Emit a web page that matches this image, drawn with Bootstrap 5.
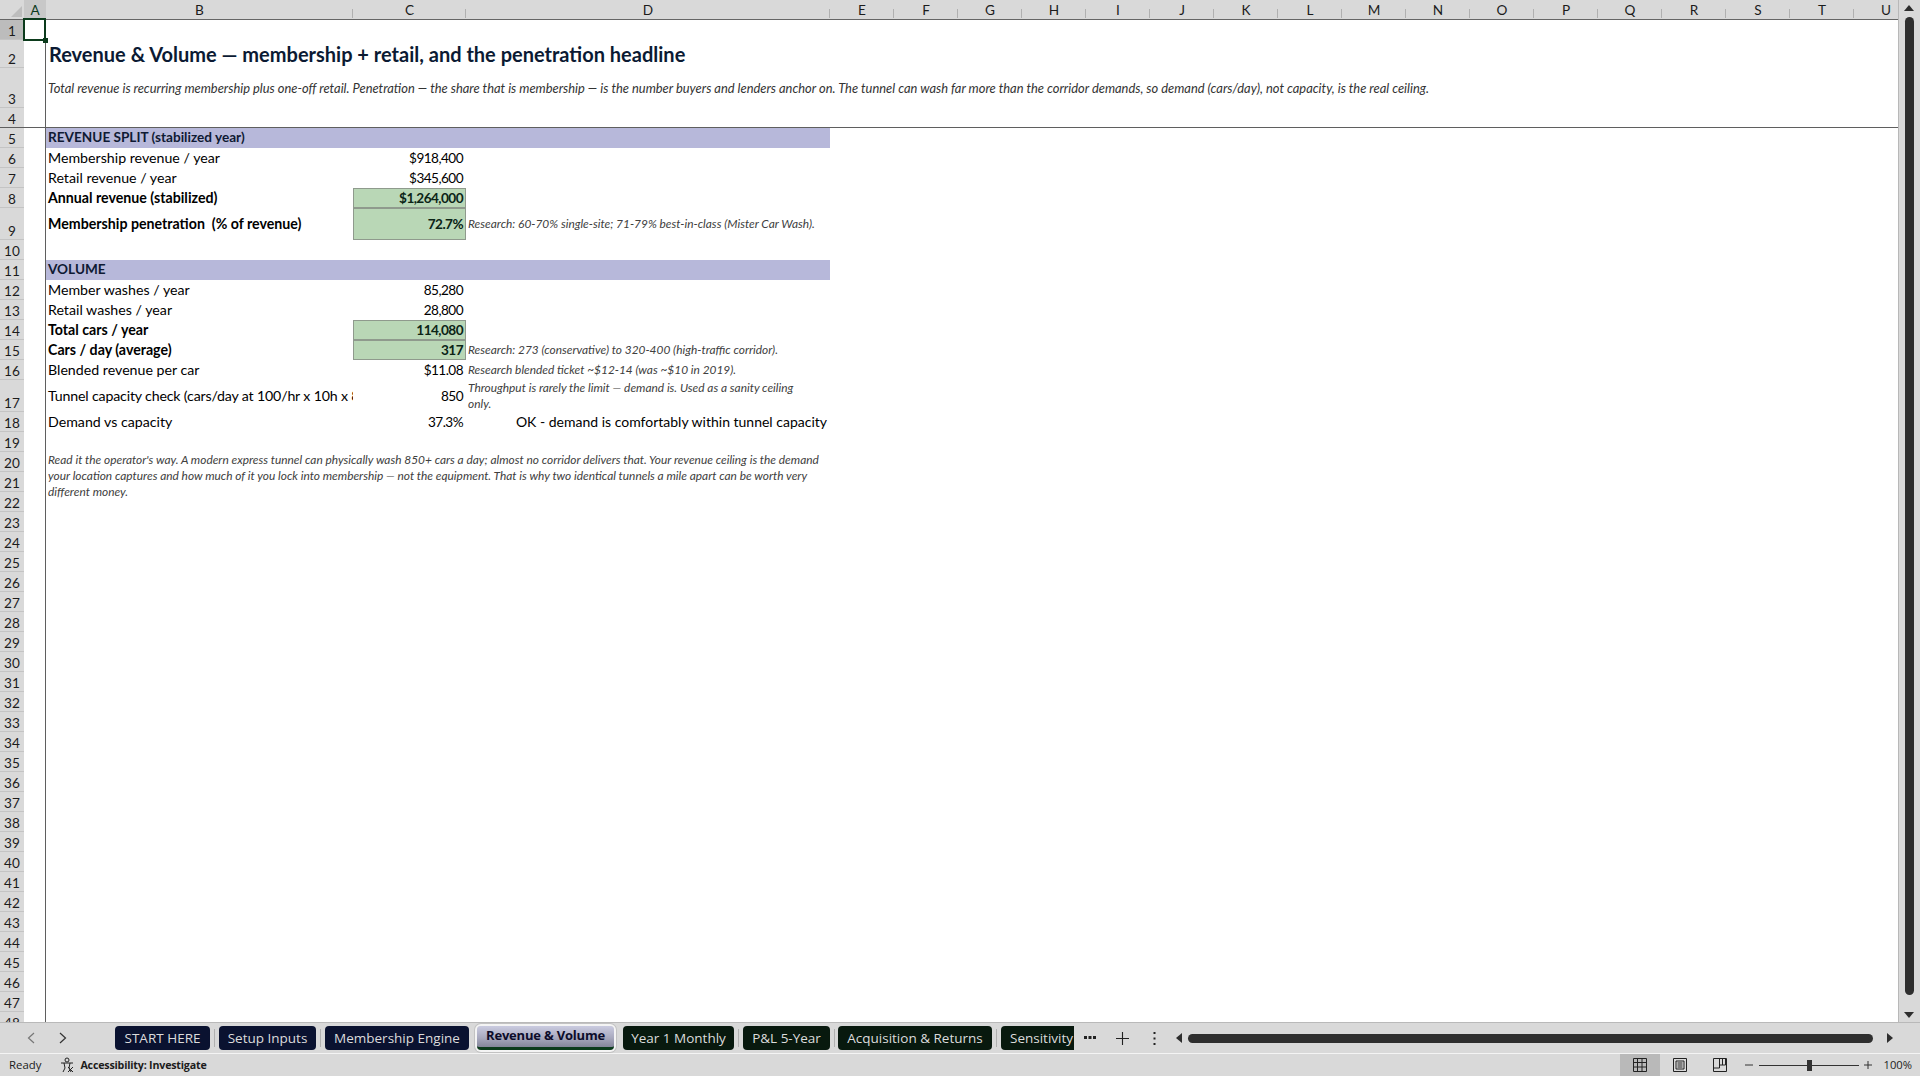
<!DOCTYPE html>
<html lang="en"><head><meta charset="utf-8"><title>Revenue &amp; Volume</title>
<link href="https://cdn.jsdelivr.net/npm/bootstrap@5.3.0/dist/css/bootstrap.min.css" rel="stylesheet">
<style>
html,body{height:100%;overflow:hidden}
body{font-family:Lato,"Liberation Sans",sans-serif;background:#d9d9d9;color:#000}
.xl-app{height:1076px;width:1920px}
.xl-main{height:1023px;overflow:hidden;border-bottom:1px solid #b9b9b9}
.xl-gridwrap{width:1899px;overflow:hidden;position:relative;background:#fff;border-right:1px solid #b8b8b8}
.xl-sheet{border-collapse:separate;border-spacing:0;table-layout:fixed;width:1898px;font-size:14.2px}
.xl-sheet col.w-rh{width:24px}.xl-sheet col.w-a{width:22px}.xl-sheet col.w-b{width:307px}.xl-sheet col.w-c{width:113px}.xl-sheet col.w-d{width:364px}.xl-sheet col.w-n{width:64px}.xl-sheet col.w-u{width:44px}
.xl-sheet th,.xl-sheet td{padding:0;overflow:hidden;white-space:nowrap;line-height:1}
.xl-sheet thead th{height:20px;background:#d9d9d9;border-bottom:1px solid #666;font-weight:400;text-align:center;color:#1c1c1c;font-size:13.6px;position:relative;padding-top:2px}
.xl-sheet thead th.hc::after{content:"";position:absolute;right:0;bottom:1px;height:9px;width:1px;background:#b0b0b0}
.xl-sheet thead th.hsel{background:#c8c8c8;color:#0c3b1c}
.xl-sheet thead th.hu{padding-left:20px}
.xl-sheet tbody th{background:#d9d9d9;text-align:center;font-weight:400;font-size:13.6px;color:#1c1c1c;vertical-align:bottom;border-bottom:1px solid #c4c4c4}
.xl-sheet tbody th.hsel{background:#bcbcbc}
.xl-sheet td{vertical-align:middle}
.xl-sheet td.xa{border-right:1px solid #5f5f5f}
.rh20{height:20px}.rh28{height:28px}.rh40{height:40px}.rh32{height:32px}
.xl-freeze>th,.xl-freeze>td{border-bottom:1px solid #5f5f5f !important}
.xl-title{font-size:20px;font-weight:700;color:#0b1a33;padding-left:3px !important}
.xl-sub{font-size:12.9px;font-style:italic;color:#333;padding-left:2px !important}
.xl-sec{background:#b7b8da;font-weight:700;color:#0f1a33;padding-left:2px !important;font-size:13.6px}
.xl-lab{padding:1px 0 0 2px !important}
.xl-tight{letter-spacing:-.17px}
.xl-b{font-weight:700}
.xl-val{text-align:right;padding:1px 3px 0 0 !important;font-size:13.6px;letter-spacing:-.55px}
.xl-kpi{background:#b9d7b6;font-weight:700;color:#0b2416;box-shadow:inset 0 0 0 1px #8f9a8d}
.xl-note{font-size:11.9px;font-style:italic;color:#404040;padding-left:2px !important}
.xl-wrap{white-space:normal !important;line-height:16px !important}
.xl-ok{text-align:right;padding-right:3px !important;font-size:14px}
.xl-para{font-size:11.9px;font-style:italic;color:#404040;white-space:normal !important;line-height:16px !important;vertical-align:top !important;padding:0 0 0 2px !important}
.xl-cursor{position:absolute;left:23px;top:18px;width:23px;height:23px;border:2px solid #0c3b1c}
.xl-cursor::after{content:"";position:absolute;right:-4px;bottom:-4px;width:5px;height:5px;background:#0c3b1c}
.xl-vbar{width:21px;position:relative}
.xl-vthumb{position:absolute;left:6px;top:17px;width:9px;height:978px;background:#2e2e2e;border-radius:5px}
.xl-vup,.xl-vdn{position:absolute;left:5px;width:0;height:0;border-left:5px solid transparent;border-right:5px solid transparent}
.xl-vup{top:5px;border-bottom:6px solid #2e2e2e}
.xl-vdn{top:1012px;border-top:6px solid #2e2e2e}
.xl-tabs{height:30px;font-family:"Open Sans","Liberation Sans",sans-serif}
.xl-navs{width:115px;padding-left:27px;gap:24px;color:#555;flex:none}
.xl-tabrow{width:959px;overflow:hidden;height:30px;padding-top:3px;flex:none}
.xl-tab{height:24px;border-radius:4px;font-size:13.5px;color:#dcdcdc;line-height:24px;white-space:nowrap;flex:none;text-align:center}
.xl-navy{background:#0a1230}
.xl-dk{background:#08190e}
.t95{width:95px}.t97{width:97px}.t144{width:144px}.t137{width:137px}.t111{width:111px}.t87{width:87px}.t154{width:154px}.t80{width:80px;text-align:left;padding-left:9px}
.xl-active{background:linear-gradient(#cacbe0,#a9aabf 55%,#85869a);color:#0c0c2a;font-weight:700;line-height:19px;border-bottom:3px solid #0c3b1c;box-shadow:0 0 0 2px #f4f4f4,0 0 0 3px #c2c2c2;font-size:13px;letter-spacing:-.2px;z-index:1}
.xl-gap9{width:9px;flex:none;display:flex;justify-content:center}
.xl-gap8{width:8px;flex:none;display:flex;justify-content:center}
.xl-sep{width:1px;background:#b0b0b0;margin:3px 0;height:18px;flex:none}
.xl-ctl{width:32px;flex:none;display:flex;justify-content:center;align-items:center}
.xl-hthumb{height:9px;width:685px;background:#2e2e2e;border-radius:5px;flex:none;margin:0 14px 0 6px}
.xl-tri-l,.xl-tri-r{width:0;height:0;border-top:5px solid transparent;border-bottom:5px solid transparent;flex:none}
.xl-tri-l{border-right:6px solid #2e2e2e;margin-left:6px}.xl-tri-r{border-left:6px solid #2e2e2e}
.xl-status{height:23px;border-top:1px solid #f4f4f4;font-size:11.4px;font-family:"Open Sans","Liberation Sans",sans-serif;color:#1c1c1c}
.xl-ready{margin-left:9px;margin-right:18px}
.xl-acc{font-weight:700;font-size:10.7px;letter-spacing:-.2px;margin-left:5px}
.xl-view{width:40px;height:22px;flex:none}
.xl-view.on{background:#b9b9b9}
.xl-zoomline{width:100px;height:1px;background:#333;position:relative;flex:none;margin:0 5px 0 6px}
.xl-zoomthumb{position:absolute;left:48px;top:-5px;width:5px;height:11px;background:#333}
.xl-minus{margin-left:5px}
.xl-pct{margin-left:12px;margin-right:8px;font-size:11.2px}
</style></head>
<body>
<div class="xl-app d-flex flex-column">
 <div class="xl-main d-flex">
  <div class="xl-gridwrap">
   <table class="xl-sheet">
    <colgroup><col class="w-rh"><col class="w-a"><col class="w-b"><col class="w-c"><col class="w-d"><col class="w-n"><col class="w-n"><col class="w-n"><col class="w-n"><col class="w-n"><col class="w-n"><col class="w-n"><col class="w-n"><col class="w-n"><col class="w-n"><col class="w-n"><col class="w-n"><col class="w-n"><col class="w-n"><col class="w-n"><col class="w-n"><col class="w-u"></colgroup>
    <thead><tr><th><svg width="14" height="14" viewBox="0 0 14 14" class="d-block ms-auto"><path d="M12 2V13H1Z" fill="#bdbdbd"/></svg></th><th class="hsel">A</th><th class="hc">B</th><th class="hc">C</th><th class="hc">D</th><th class="hc">E</th><th class="hc">F</th><th class="hc">G</th><th class="hc">H</th><th class="hc">I</th><th class="hc">J</th><th class="hc">K</th><th class="hc">L</th><th class="hc">M</th><th class="hc">N</th><th class="hc">O</th><th class="hc">P</th><th class="hc">Q</th><th class="hc">R</th><th class="hc">S</th><th class="hc">T</th><th class="hu">U</th></tr></thead>
    <tbody>
     <tr class="rh20"><th class="hsel">1</th><td class="xa"></td><td colspan="20"></td></tr>
     <tr class="rh28"><th>2</th><td class="xa"></td><td colspan="20" class="xl-title">Revenue &amp; Volume — membership + retail, and the penetration headline</td></tr>
     <tr class="rh40"><th>3</th><td class="xa"></td><td colspan="20" class="xl-sub">Total revenue is recurring membership plus one-off retail. Penetration — the share that is membership — is the number buyers and lenders anchor on. The tunnel can wash far more than the corridor demands, so demand (cars/day), not capacity, is the real ceiling.</td></tr>
     <tr class="rh20 xl-freeze"><th>4</th><td class="xa"></td><td colspan="20"></td></tr>
     <tr class="rh20"><th>5</th><td class="xa"></td><td colspan="3" class="xl-sec">REVENUE SPLIT (stabilized year)</td><td colspan="17"></td></tr>
     <tr class="rh20"><th>6</th><td class="xa"></td><td class="xl-lab">Membership revenue / year</td><td class="xl-val">$918,400</td><td colspan="18"></td></tr>
     <tr class="rh20"><th>7</th><td class="xa"></td><td class="xl-lab">Retail revenue / year</td><td class="xl-val">$345,600</td><td colspan="18"></td></tr>
     <tr class="rh20"><th>8</th><td class="xa"></td><td class="xl-lab xl-b">Annual revenue (stabilized)</td><td class="xl-val xl-kpi">$1,264,000</td><td colspan="18"></td></tr>
     <tr class="rh32"><th>9</th><td class="xa"></td><td class="xl-lab xl-b">Membership penetration&nbsp; (% of revenue)</td><td class="xl-val xl-kpi">72.7%</td><td class="xl-note">Research: 60-70% single-site; 71-79% best-in-class (Mister Car Wash).</td><td colspan="17"></td></tr>
     <tr class="rh20"><th>10</th><td class="xa"></td><td colspan="20"></td></tr>
     <tr class="rh20"><th>11</th><td class="xa"></td><td colspan="3" class="xl-sec">VOLUME</td><td colspan="17"></td></tr>
     <tr class="rh20"><th>12</th><td class="xa"></td><td class="xl-lab">Member washes / year</td><td class="xl-val">85,280</td><td colspan="18"></td></tr>
     <tr class="rh20"><th>13</th><td class="xa"></td><td class="xl-lab">Retail washes / year</td><td class="xl-val">28,800</td><td colspan="18"></td></tr>
     <tr class="rh20"><th>14</th><td class="xa"></td><td class="xl-lab xl-b">Total cars / year</td><td class="xl-val xl-kpi">114,080</td><td colspan="18"></td></tr>
     <tr class="rh20"><th>15</th><td class="xa"></td><td class="xl-lab xl-b">Cars / day (average)</td><td class="xl-val xl-kpi">317</td><td class="xl-note">Research: 273 (conservative) to 320-400 (high-traffic corridor).</td><td colspan="17"></td></tr>
     <tr class="rh20"><th>16</th><td class="xa"></td><td class="xl-lab">Blended revenue per car</td><td class="xl-val">$11.08</td><td class="xl-note">Research blended ticket ~$12-14 (was ~$10 in 2019).</td><td colspan="17"></td></tr>
     <tr class="rh32"><th>17</th><td class="xa"></td><td class="xl-lab xl-tight">Tunnel capacity check (cars/day at 100/hr x 10h x 85% uptime)</td><td class="xl-val">850</td><td class="xl-note xl-wrap">Throughput is rarely the limit — demand is. Used as a sanity ceiling<br>only.</td><td colspan="17"></td></tr>
     <tr class="rh20"><th>18</th><td class="xa"></td><td class="xl-lab">Demand vs capacity</td><td class="xl-val">37.3%</td><td class="xl-ok">OK - demand is comfortably within tunnel capacity</td><td colspan="17"></td></tr>
     <tr class="rh20"><th>19</th><td class="xa"></td><td colspan="20"></td></tr>
     <tr class="rh20"><th>20</th><td class="xa"></td><td colspan="3" rowspan="3" class="xl-para">Read it the operator's way. A modern express tunnel can physically wash 850+ cars a day; almost no corridor delivers that. Your revenue ceiling is the demand your location captures and how much of it you lock into membership — not the equipment. That is why two identical tunnels a mile apart can be worth very different money.</td><td colspan="17"></td></tr>
     <tr class="rh20"><th>21</th><td class="xa"></td><td colspan="17"></td></tr>
     <tr class="rh20"><th>22</th><td class="xa"></td><td colspan="17"></td></tr>
     <tr class="rh20"><th>23</th><td class="xa"></td><td colspan="20"></td></tr>
     <tr class="rh20"><th>24</th><td class="xa"></td><td colspan="20"></td></tr>
     <tr class="rh20"><th>25</th><td class="xa"></td><td colspan="20"></td></tr>
     <tr class="rh20"><th>26</th><td class="xa"></td><td colspan="20"></td></tr>
     <tr class="rh20"><th>27</th><td class="xa"></td><td colspan="20"></td></tr>
     <tr class="rh20"><th>28</th><td class="xa"></td><td colspan="20"></td></tr>
     <tr class="rh20"><th>29</th><td class="xa"></td><td colspan="20"></td></tr>
     <tr class="rh20"><th>30</th><td class="xa"></td><td colspan="20"></td></tr>
     <tr class="rh20"><th>31</th><td class="xa"></td><td colspan="20"></td></tr>
     <tr class="rh20"><th>32</th><td class="xa"></td><td colspan="20"></td></tr>
     <tr class="rh20"><th>33</th><td class="xa"></td><td colspan="20"></td></tr>
     <tr class="rh20"><th>34</th><td class="xa"></td><td colspan="20"></td></tr>
     <tr class="rh20"><th>35</th><td class="xa"></td><td colspan="20"></td></tr>
     <tr class="rh20"><th>36</th><td class="xa"></td><td colspan="20"></td></tr>
     <tr class="rh20"><th>37</th><td class="xa"></td><td colspan="20"></td></tr>
     <tr class="rh20"><th>38</th><td class="xa"></td><td colspan="20"></td></tr>
     <tr class="rh20"><th>39</th><td class="xa"></td><td colspan="20"></td></tr>
     <tr class="rh20"><th>40</th><td class="xa"></td><td colspan="20"></td></tr>
     <tr class="rh20"><th>41</th><td class="xa"></td><td colspan="20"></td></tr>
     <tr class="rh20"><th>42</th><td class="xa"></td><td colspan="20"></td></tr>
     <tr class="rh20"><th>43</th><td class="xa"></td><td colspan="20"></td></tr>
     <tr class="rh20"><th>44</th><td class="xa"></td><td colspan="20"></td></tr>
     <tr class="rh20"><th>45</th><td class="xa"></td><td colspan="20"></td></tr>
     <tr class="rh20"><th>46</th><td class="xa"></td><td colspan="20"></td></tr>
     <tr class="rh20"><th>47</th><td class="xa"></td><td colspan="20"></td></tr>
     <tr class="rh20"><th>48</th><td class="xa"></td><td colspan="20"></td></tr>
    </tbody>
   </table>
   <div class="xl-cursor"></div>
  </div>
  <div class="xl-vbar"><div class="xl-vup"></div><div class="xl-vthumb"></div><div class="xl-vdn"></div></div>
 </div>
 <div class="xl-tabs d-flex align-items-center">
  <div class="xl-navs d-flex align-items-center">
   <svg width="8" height="12" viewBox="0 0 8 12"><path d="M7 1L1.5 6 7 11" fill="none" stroke="#777" stroke-width="1.2"/></svg>
   <svg width="8" height="12" viewBox="0 0 8 12"><path d="M1 1L6.5 6 1 11" fill="none" stroke="#333" stroke-width="1.2"/></svg>
  </div>
  <div class="xl-tabrow d-flex">
   <div class="xl-tab xl-navy t95">START HERE</div><div class="xl-gap9"><div class="xl-sep"></div></div>
   <div class="xl-tab xl-navy t97">Setup Inputs</div><div class="xl-gap9"><div class="xl-sep"></div></div>
   <div class="xl-tab xl-navy t144">Membership Engine</div><div class="xl-gap8"></div>
   <div class="xl-tab xl-active t137">Revenue &amp; Volume</div><div class="xl-gap9"></div>
   <div class="xl-tab xl-dk t111">Year 1 Monthly</div><div class="xl-gap9"><div class="xl-sep"></div></div>
   <div class="xl-tab xl-dk t87">P&amp;L 5-Year</div><div class="xl-gap8"><div class="xl-sep"></div></div>
   <div class="xl-tab xl-dk t154">Acquisition &amp; Returns</div><div class="xl-gap9"><div class="xl-sep"></div></div>
   <div class="xl-tab xl-dk t80">Sensitivity</div>
  </div>
  <div class="xl-ctl"><svg width="12" height="4" viewBox="0 0 12 4" fill="#222"><path d="M0 0h3v3H0zM4.500 0h3v3h-3zM9 0h3v3H9z"/></svg></div>
  <div class="xl-ctl"><svg width="13" height="13" viewBox="0 0 13 13"><path d="M0 6.500h13M6.500 0v13" stroke="#222" stroke-width="1.100"/></svg></div>
  <div class="xl-ctl"><svg width="3" height="13" viewBox="0 0 3 13" fill="#222"><path d="M.5 0h2v2h-2zM.5 5.500h2v2h-2zM.5 11h2v2h-2z"/></svg></div>
  <div class="xl-tri-l"></div>
  <div class="xl-hthumb"></div>
  <div class="xl-tri-r"></div>
 </div>
 <div class="xl-status d-flex align-items-center">
  <span class="xl-ready">Ready</span>
  <svg width="16" height="16" viewBox="0 0 16 16" fill="none" stroke="#222" stroke-width="1"><circle cx="8" cy="3" r="2"/><path d="M2 6h12M5 6l1 5-2 4M11 6l-1 5 2 4"/><path d="M9 10l5 5M14 10l-5 5"/></svg>
  <span class="xl-acc">Accessibility: Investigate</span>
  <div class="ms-auto d-flex align-items-center">
   <div class="xl-view on d-flex align-items-center justify-content-center"><svg width="14" height="14" viewBox="0 0 14 14" fill="none" stroke="#222"><path d="M.5.5h13v13H.5zM.5 4.500h13M.5 9h13M4.500.5v13M9 .5v13"/></svg></div>
   <div class="xl-view d-flex align-items-center justify-content-center"><svg width="14" height="14" viewBox="0 0 14 14" fill="none" stroke="#222"><path d="M.5.5h13v13H.5zM3 3h8v8H3zM4.500 5h5M4.500 7h5M4.500 9h5"/></svg></div>
   <div class="xl-view d-flex align-items-center justify-content-center"><svg width="14" height="14" viewBox="0 0 14 14" fill="none" stroke="#222"><path d="M.5.5h13v13H.5zM.5 10h6V.5M6.500 7h6V.5M9.500.5V7"/></svg></div>
   <svg class="xl-minus" width="8" height="8" viewBox="0 0 8 8"><path d="M0 4h8" stroke="#333"/></svg>
   <div class="xl-zoomline"><div class="xl-zoomthumb"></div></div>
   <svg width="8" height="8" viewBox="0 0 8 8"><path d="M0 4h8M4 0v8" stroke="#333"/></svg>
   <span class="xl-pct">100%</span>
  </div>
 </div>
</div>
<script src="https://cdn.jsdelivr.net/npm/bootstrap@5.3.0/dist/js/bootstrap.bundle.min.js"></script>
</body></html>
